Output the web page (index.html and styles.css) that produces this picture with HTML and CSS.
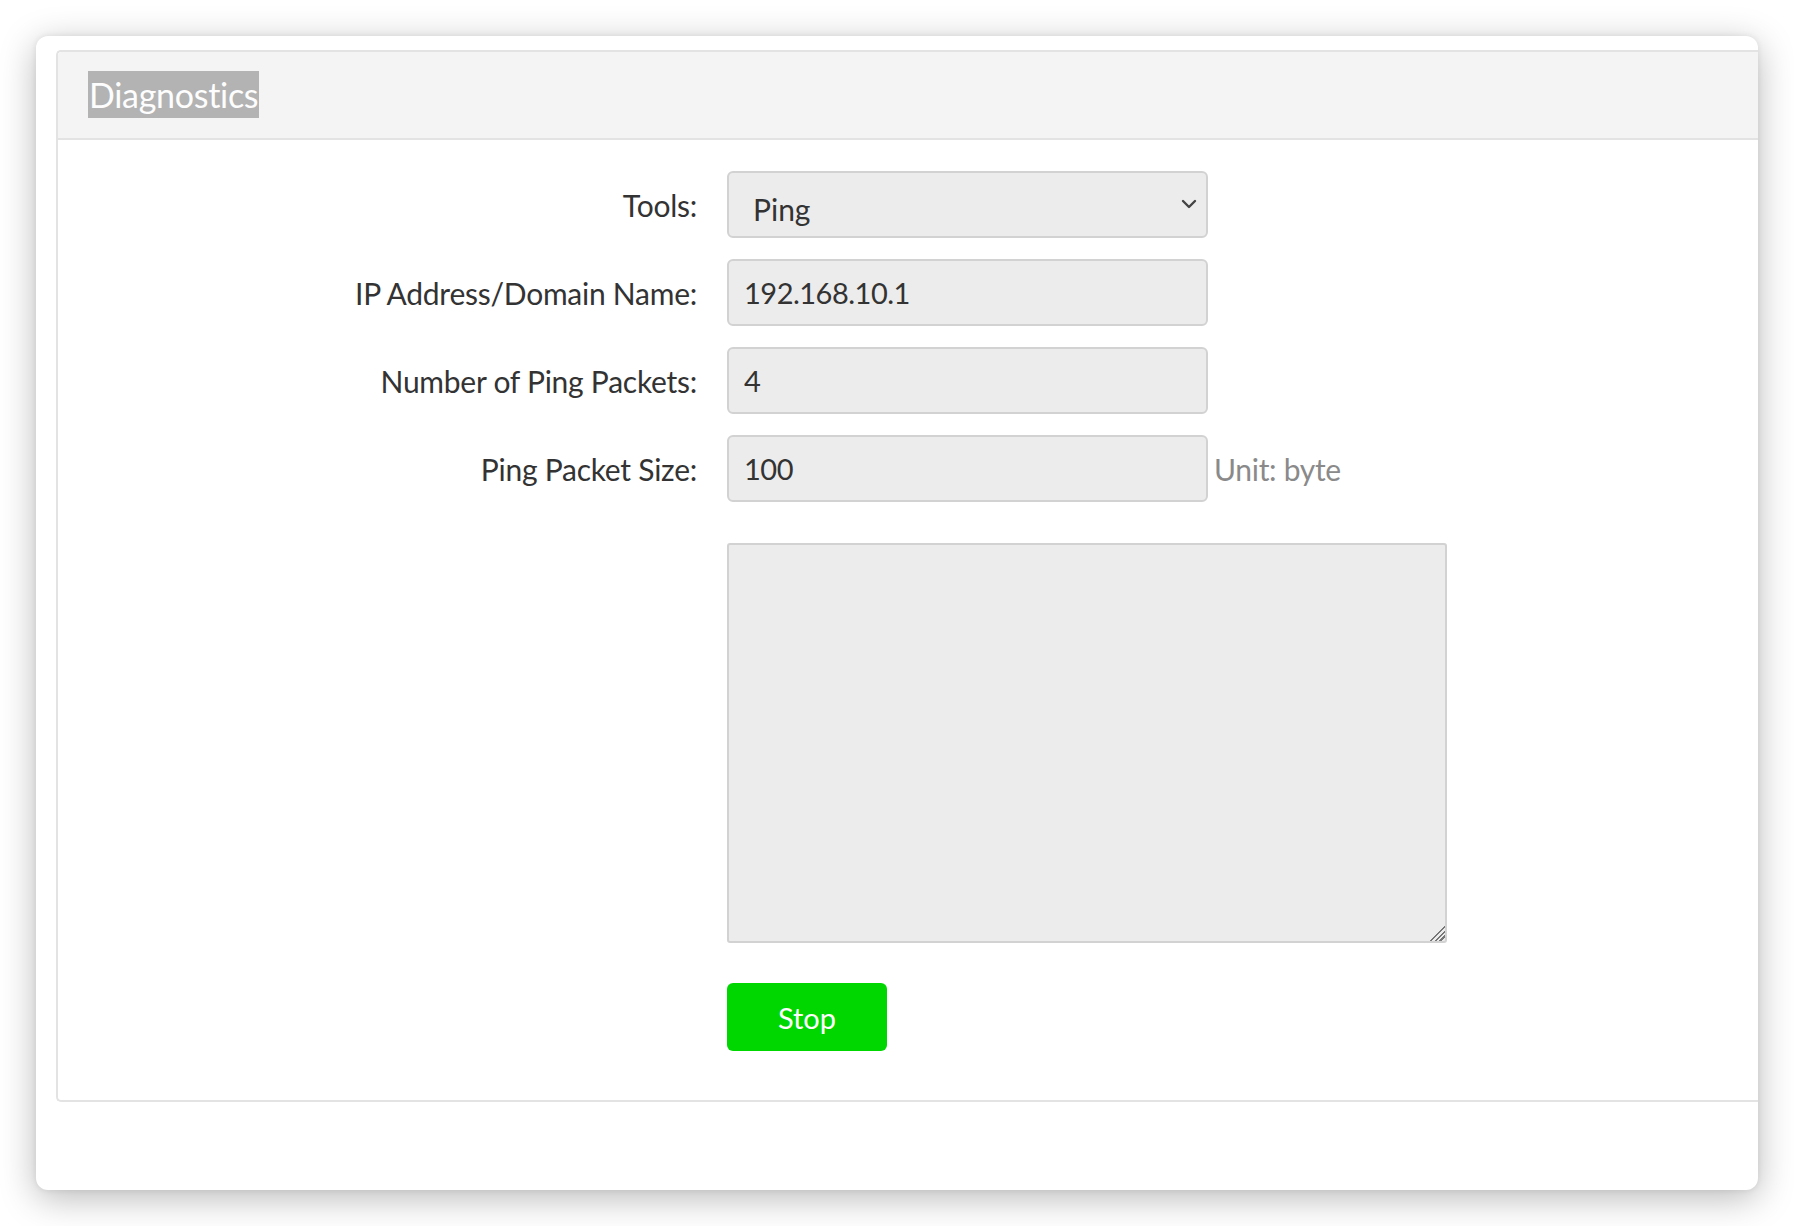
FILE: index.html
```html
<!DOCTYPE html>
<html>
<head>
<meta charset="utf-8">
<link rel="stylesheet" href="styles.css">
</head>
<body>
<div class="window">
  <div class="panel">
    <div class="panel-header"><span class="title">Diagnostics</span></div>
    <div class="panel-body">
      <div class="form">
        <label class="label">Tools:</label>
        <div class="field">
          <div class="select-wrap">
            <select class="control select"><option>Ping</option><option>Traceroute</option></select>
            <svg class="chevron" width="16" height="10" viewBox="0 0 16 10"><path d="M2 2 L8 8 L14 2" fill="none" stroke="#444" stroke-width="2.4" stroke-linecap="round" stroke-linejoin="round"/></svg>
          </div>
        </div>
        <label class="label">IP Address/Domain Name:</label>
        <div class="field"><input class="control" type="text" value="192.168.10.1"></div>
        <label class="label">Number of Ping Packets:</label>
        <div class="field"><input class="control" type="text" value="4"></div>
        <label class="label">Ping Packet Size:</label>
        <div class="field"><input class="control" type="text" value="100"><span class="unit">Unit: byte</span></div>
        <div class="label"></div>
        <div class="field field-area"><textarea class="output"></textarea></div>
        <div class="label"></div>
        <div class="field field-btn"><button class="btn-stop">Stop</button></div>
      </div>
    </div>
  </div>
</div>
</body>
</html>
```

FILE: styles.css
```css
html, body {
  margin: 0;
  padding: 0;
  background: #ffffff;
}
body {
  font-family: "Lato", "Liberation Sans", sans-serif;
  color: #333;
  width: 1794px;
  height: 1226px;
  overflow: hidden;
}
.window {
  margin: 36px 0 0 36px;
  width: 1722px;
  height: 1154px;
  box-sizing: border-box;
  background: #fff;
  border-radius: 12px;
  box-shadow: 0 8px 36px rgba(0, 0, 0, 0.28), 0 0 6px rgba(0,0,0,0.08);
  padding: 14px 0 0 20px;
}
.panel {
  border: 2px solid #e3e3e3;
  border-right: none;
  border-radius: 5px 0 0 5px;
  height: 1052px;
  box-sizing: border-box;
}
.panel-header {
  background: #f4f4f4;
  border-bottom: 2px solid #e3e3e3;
  height: 88px;
  box-sizing: border-box;
  padding: 19px 0 0 30px;
  border-radius: 4px 0 0 0;
}
.title {
  display: inline-block;
  background: #b3b3b3;
  color: #fdfdfd;
  font-size: 34px;
  line-height: 47px;
  height: 47px;
  padding: 0 1px;
  letter-spacing: -0.3px;
}
.panel-body {
  padding: 31px 0 0 0;
}
.form {
  display: grid;
  grid-template-columns: 639px auto;
  column-gap: 30px;
  row-gap: 21px;
  align-items: center;
}
.label {
  text-align: right;
  font-size: 30px;
  color: #333;
  letter-spacing: -0.25px;
}
.field {
  display: flex;
  align-items: center;
  gap: 6px;
}
.control {
  width: 481px;
  height: 67px;
  box-sizing: border-box;
  background: #ececec;
  border: 2px solid #d2d2d2;
  border-radius: 6px;
  font-family: "Lato", "Liberation Sans", sans-serif;
  font-size: 29px;
  color: #333;
  padding: 0 15px;
  outline: none;
  letter-spacing: -0.5px;
}
.select-wrap {
  position: relative;
  width: 481px;
  height: 67px;
}
.select {
  -webkit-appearance: none;
  appearance: none;
  padding: 9px 0 0 24px;
  font-size: 30px;
  letter-spacing: 0;
}
.chevron {
  position: absolute;
  right: 11px;
  top: 28px;
}
.unit {
  font-size: 30px;
  color: #8a8a8a;
  letter-spacing: -0.3px;
}
.field-area {
  margin-top: 20px;
}
.output {
  width: 720px;
  height: 400px;
  box-sizing: border-box;
  background: #ececec;
  border: 2px solid #d2d2d2;
  border-radius: 3px;
  resize: both;
  outline: none;
}
.output::-webkit-resizer {
  background: linear-gradient(135deg, transparent 0 48%, #777 48% 55%, transparent 55% 64%, #777 64% 71%, transparent 71% 80%, #777 80% 87%, transparent 87%);
}
.field-btn {
  margin-top: 19px;
}
.btn-stop {
  width: 160px;
  height: 68px;
  background: #00d700;
  color: #fff;
  border: none;
  border-radius: 6px;
  font-family: "Lato", "Liberation Sans", sans-serif;
  font-size: 29px;
  padding: 0;
  cursor: pointer;
}
```
